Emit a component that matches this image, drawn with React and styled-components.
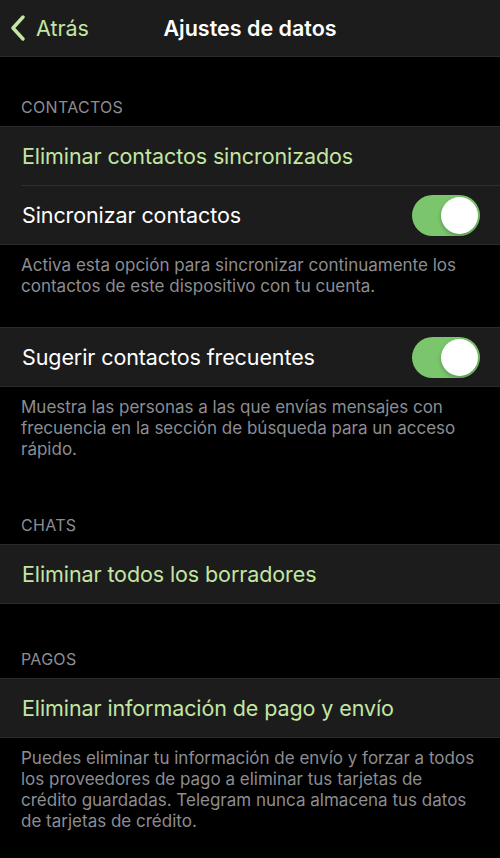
import React from 'react';
import styled, { createGlobalStyle } from 'styled-components';

const GlobalStyle = createGlobalStyle`
  html, body {
    margin: 0;
    padding: 0;
    background: #000;
  }
  body {
    font-family: Inter, "Noto Sans", sans-serif;
    -webkit-font-smoothing: antialiased;
  }
`;

const Screen = styled.div`
  width: 500px;
  min-height: 858px;
  background: #000;
  display: flex;
  flex-direction: column;
`;

const NavBar = styled.div`
  height: 56px;
  background: #1c1c1d;
  border-bottom: 1px solid #2c2c2e;
  display: grid;
  grid-template-columns: 1fr auto 1fr;
  align-items: center;
`;

const BackButton = styled.div`
  display: flex;
  align-items: center;
  gap: 10px;
  padding-left: 10px;
  color: #c3e6a3;
  font-size: 21.5px;
`;

const Title = styled.div`
  color: #fff;
  font-size: 21.5px;
  font-weight: 600;
`;

const SectionHeader = styled.div`
  padding: ${p => p.$top}px 21px 10px;
  color: #8d8d92;
  font-size: 16px;
  line-height: 18px;
  text-transform: uppercase;
  letter-spacing: 0.3px;
`;

const Group = styled.div`
  background: #1c1c1d;
  border-top: 1px solid #2a2a2c;
  border-bottom: 1px solid #2a2a2c;
  margin-top: ${p => p.$top || 0}px;
`;

const Row = styled.div`
  height: 58px;
  display: flex;
  align-items: center;
  justify-content: space-between;
  padding: 0 20px 0 22px;
  color: ${p => (p.$action ? '#c3e6a3' : '#fff')};
  font-size: 21.5px;
  letter-spacing: -0.1px;

  & + & {
    border-top: 1px solid #2e2e30;
    margin-left: 21px;
    padding-left: 1px;
  }
`;

const Footer = styled.div`
  padding: 10px 20px 0 21px;
  color: #8d8d92;
  font-size: 17px;
  line-height: 21px;
`;

const Track = styled.div`
  width: 68px;
  height: 41px;
  border-radius: 21px;
  background: ${p => (p.$on ? '#7bc66c' : '#39393d')};
  display: flex;
  align-items: center;
  justify-content: ${p => (p.$on ? 'flex-end' : 'flex-start')};
  padding: 0 2px;
  box-sizing: border-box;
`;

const Knob = styled.div`
  width: 37px;
  height: 37px;
  border-radius: 50%;
  background: #fff;
  box-shadow: 0 2px 4px rgba(0, 0, 0, 0.25);
`;

const Toggle = ({ on }) => (
  <Track $on={on}>
    <Knob />
  </Track>
);

const Chevron = () => (
  <svg width="16" height="26" viewBox="0 0 16 26" fill="none">
    <path
      d="M13 2 L3 13 L13 24"
      stroke="#c3e6a3"
      strokeWidth="3.4"
      strokeLinecap="round"
      strokeLinejoin="round"
    />
  </svg>
);

export default function App() {
  return (
    <Screen>
      <GlobalStyle />
      <NavBar>
        <BackButton>
          <Chevron />
          <span>Atrás</span>
        </BackButton>
        <Title>Ajustes de datos</Title>
        <div />
      </NavBar>

      <SectionHeader $top={41}>Contactos</SectionHeader>
      <Group>
        <Row $action>Eliminar contactos sincronizados</Row>
        <Row>
          Sincronizar contactos
          <Toggle on />
        </Row>
      </Group>
      <Footer>
        Activa esta opción para sincronizar continuamente los contactos de este
        dispositivo con tu cuenta.
      </Footer>

      <Group $top={30}>
        <Row>
          Sugerir contactos frecuentes
          <Toggle on />
        </Row>
      </Group>
      <Footer>
        Muestra las personas a las que envías mensajes con frecuencia en la
        sección de búsqueda para un acceso rápido.
      </Footer>

      <SectionHeader $top={56}>Chats</SectionHeader>
      <Group>
        <Row $action>Eliminar todos los borradores</Row>
      </Group>

      <SectionHeader $top={46}>Pagos</SectionHeader>
      <Group>
        <Row $action>Eliminar información de pago y envío</Row>
      </Group>
      <Footer>
        Puedes eliminar tu información de envío y forzar a todos los proveedores
        de pago a eliminar tus tarjetas de crédito guardadas. Telegram nunca
        almacena tus datos de tarjetas de crédito.
      </Footer>
    </Screen>
  );
}
